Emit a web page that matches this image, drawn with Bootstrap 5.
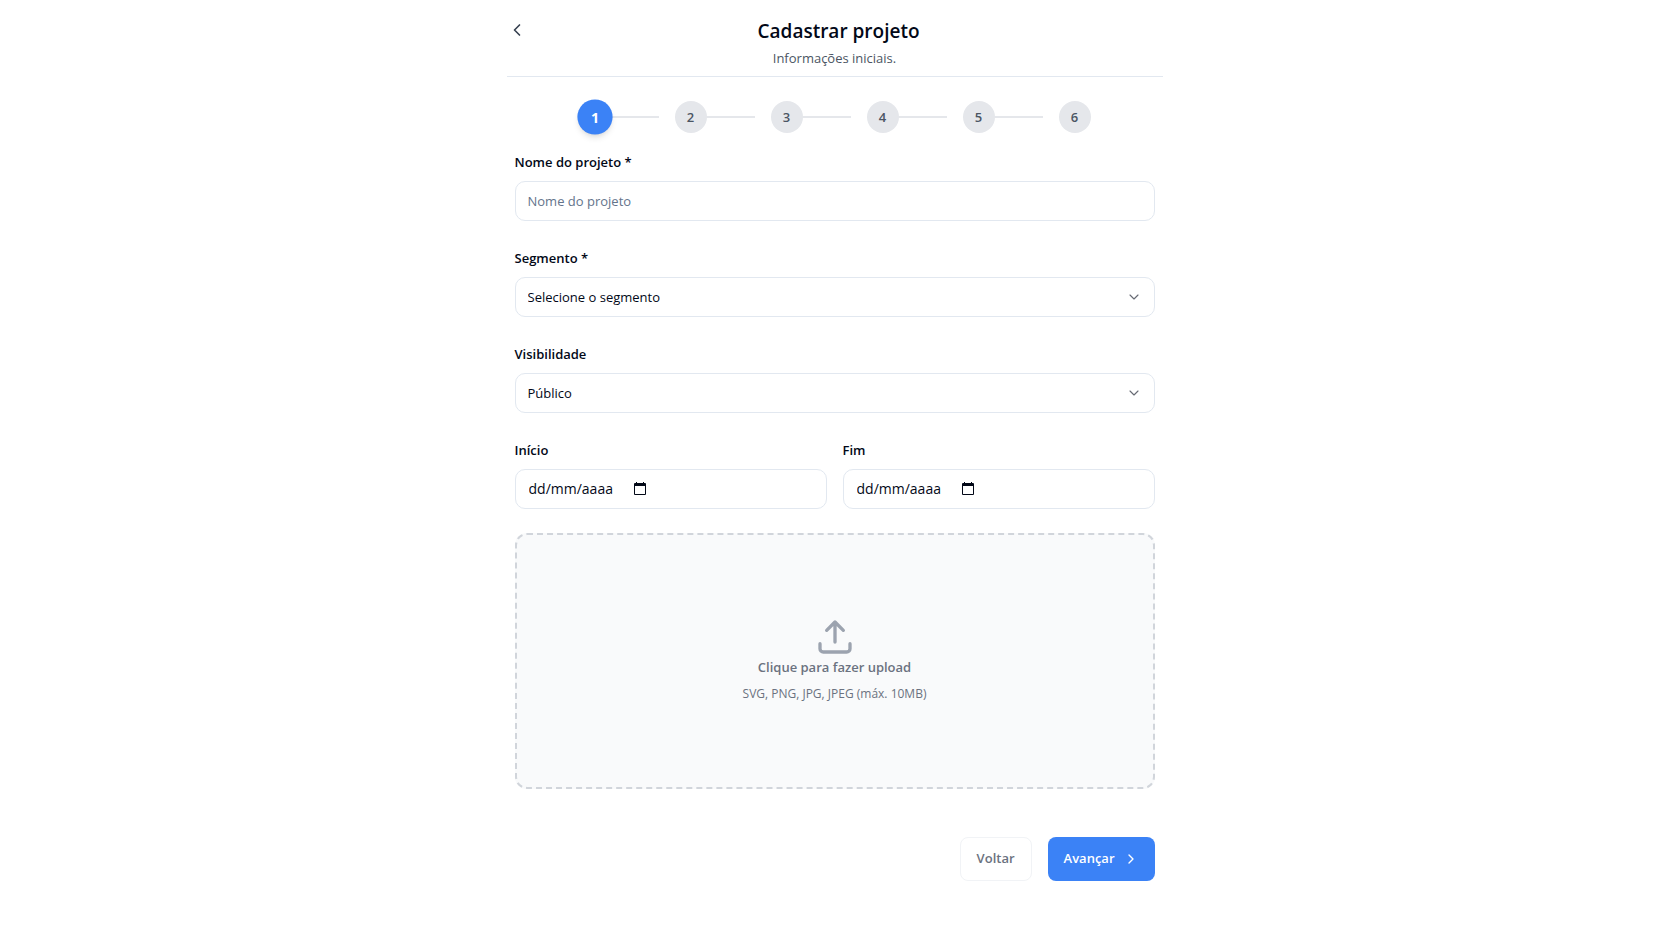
<!DOCTYPE html>
<html lang="pt-BR">
<head>
<meta charset="utf-8">
<meta name="viewport" content="width=device-width, initial-scale=1">
<title>Cadastrar projeto</title>
<link href="https://cdn.jsdelivr.net/npm/bootstrap@5.3.0/dist/css/bootstrap.min.css" rel="stylesheet">
<style>
  body { font-family: "Open Sans", "Noto Sans", sans-serif; font-size: 13px; line-height: 20px; color: #020817; background: #fff; }
  .wizard { max-width: 656px; }
  .wizard-header { border-bottom: 1px solid #e2e8f0; padding: 17px 0 8px; }
  .wizard-header h1 { font-size: 19px; line-height: 28px; font-weight: 600; padding-left: 4px; }
  .wizard-header p { color: #4b5563; margin-top: 3px; }
  .back { color: #374151; line-height: 0; margin-bottom: 2px; }
  .steps { padding-top: 24px; margin-bottom: 19px; }
  .step-dot { width: 32px; height: 32px; border-radius: 50%; background: #e5e7eb; color: #4b5563; font-weight: 600; }
  .step-dot.current { background: #3b82f6; color: #fff; font-weight: 700; transform: scale(1.1); box-shadow: 0 4px 6px -1px rgba(0,0,0,.1), 0 2px 4px -2px rgba(0,0,0,.1); }
  .step-line { width: 48px; height: 2px; background: #e5e7eb; }
  .form-label { font-size: 13px; font-weight: 600; line-height: 20px; margin-bottom: 9px; display: block; }
  .form-control, .form-select { height: 40px; border: 1px solid #e2e8f0; border-radius: 10px; padding: 0 12px; font-size: 13px; line-height: 20px; color: #020817; background-color: #fff; }
  .form-control::placeholder { color: #64748b; }
  .form-select { background-image: url("data:image/svg+xml,%3csvg xmlns='http://www.w3.org/2000/svg' viewBox='0 0 24 24' fill='none' stroke='%23020817' stroke-opacity='.6' stroke-width='1.7' stroke-linecap='round' stroke-linejoin='round'%3e%3cpath d='m6 9 6 6 6-6'/%3e%3c/svg%3e"); background-size: 16px 16px; background-position: right 12px center; }
  .field { margin-bottom: 27px; }
  .date-text { width: 105px; border: 0; outline: 0; padding: 0 0 0 1px; color: #020817; font-size: 14px; }
  .date-text::placeholder { color: #020817; opacity: 1; }
  .dropzone { height: 256px; border: 2px dashed #d1d5db; border-radius: 12px; background: #f9fafb; color: #6b7280; cursor: pointer; margin-top: 24px; padding-bottom: 3px; }
  .dropzone svg { color: #9ca3af; }
  .drop-title { font-weight: 600; margin-bottom: 9px; }
  .drop-note { font-size: 12px; line-height: 16px; }
  .actions { margin-top: 48px; }
  .actions .btn { height: 44px; padding: 0 16px; border-radius: 8px; font-size: 13px; font-weight: 600; }
  .btn-back { background: #fff; border: 1px solid #f1f3f6; color: #6b7280; }
  .btn-next { background: #3b82f6; color: #fff; border: 0; }
</style>
</head>
<body>
<main class="wizard container-fluid p-0">
  <header class="wizard-header text-center">
    <div class="d-flex align-items-center">
      <button type="button" class="back btn p-0 border-0" aria-label="Voltar">
        <svg width="20" height="20" viewBox="0 0 24 24" fill="none" stroke="currentColor" stroke-width="2" stroke-linecap="round" stroke-linejoin="round"><path d="m15 18-6-6 6-6"/></svg>
      </button>
      <h1 class="flex-fill m-0 pe-3">Cadastrar projeto</h1>
    </div>
    <p class="mb-0">Informações iniciais.</p>
  </header>

  <form class="px-2">
    <div class="steps d-flex justify-content-center gap-3">
      <div class="d-flex align-items-center"><span class="step-dot current d-flex align-items-center justify-content-center">1</span><span class="step-line"></span></div>
      <div class="d-flex align-items-center"><span class="step-dot d-flex align-items-center justify-content-center">2</span><span class="step-line"></span></div>
      <div class="d-flex align-items-center"><span class="step-dot d-flex align-items-center justify-content-center">3</span><span class="step-line"></span></div>
      <div class="d-flex align-items-center"><span class="step-dot d-flex align-items-center justify-content-center">4</span><span class="step-line"></span></div>
      <div class="d-flex align-items-center"><span class="step-dot d-flex align-items-center justify-content-center">5</span><span class="step-line"></span></div>
      <div class="d-flex align-items-center"><span class="step-dot d-flex align-items-center justify-content-center">6</span></div>
    </div>

    <div class="field">
      <label class="form-label" for="nome">Nome do projeto *</label>
      <input class="form-control" id="nome" type="text" placeholder="Nome do projeto">
    </div>
    <div class="field">
      <label class="form-label" for="segmento">Segmento *</label>
      <select class="form-select" id="segmento"><option>Selecione o segmento</option></select>
    </div>
    <div class="field">
      <label class="form-label" for="visibilidade">Visibilidade</label>
      <select class="form-select" id="visibilidade"><option>Público</option></select>
    </div>
    <div class="row gx-3">
      <div class="col-6">
        <label class="form-label" for="inicio">Início</label>
        <div class="form-control d-flex align-items-center">
          <input class="date-text" id="inicio" type="text" inputmode="numeric" placeholder="dd/mm/aaaa">
          <button type="button" class="btn p-0 border-0 lh-1 d-flex" aria-label="Abrir calendário de início">
            <svg width="14" height="14" viewBox="0 0 14 14"><path fill="#020817" fill-rule="evenodd" d="M3 0h1v1h6V0h1v1h1q1 0 1 1v10q0 1-1 1H2q-1 0-1-1V2q0-1 1-1h1zM2 4v8h10V4z"/></svg>
          </button>
        </div>
      </div>
      <div class="col-6">
        <label class="form-label" for="fim">Fim</label>
        <div class="form-control d-flex align-items-center">
          <input class="date-text" id="fim" type="text" inputmode="numeric" placeholder="dd/mm/aaaa">
          <button type="button" class="btn p-0 border-0 lh-1 d-flex" aria-label="Abrir calendário de fim">
            <svg width="14" height="14" viewBox="0 0 14 14"><path fill="#020817" fill-rule="evenodd" d="M3 0h1v1h6V0h1v1h1q1 0 1 1v10q0 1-1 1H2q-1 0-1-1V2q0-1 1-1h1zM2 4v8h10V4z"/></svg>
          </button>
        </div>
      </div>
    </div>

    <label class="dropzone d-flex flex-column align-items-center justify-content-center" for="arquivo">
      <svg width="40" height="40" viewBox="0 0 24 24" fill="none" stroke="currentColor" stroke-width="2" stroke-linecap="round" stroke-linejoin="round"><path d="M12 15V3M7 8l5-5 5 5M3 16v3a2 2 0 0 0 2 2h14a2 2 0 0 0 2-2v-3"/></svg>
      <span class="drop-title">Clique para fazer upload</span>
      <span class="drop-note">SVG, PNG, JPG, JPEG (máx. 10MB)</span>
      <input type="file" id="arquivo" class="visually-hidden" accept=".svg,.png,.jpg,.jpeg">
    </label>

    <div class="actions d-flex justify-content-end gap-3">
      <button type="button" class="btn btn-back">Voltar</button>
      <button type="submit" class="btn btn-next d-flex align-items-center gap-2">Avançar
        <svg width="16" height="16" viewBox="0 0 24 24" fill="none" stroke="currentColor" stroke-width="2" stroke-linecap="round" stroke-linejoin="round"><path d="m9 18 6-6-6-6"/></svg>
      </button>
    </div>
  </form>
</main>
<script src="https://cdn.jsdelivr.net/npm/bootstrap@5.3.0/dist/js/bootstrap.bundle.min.js"></script>
</body>
</html>
